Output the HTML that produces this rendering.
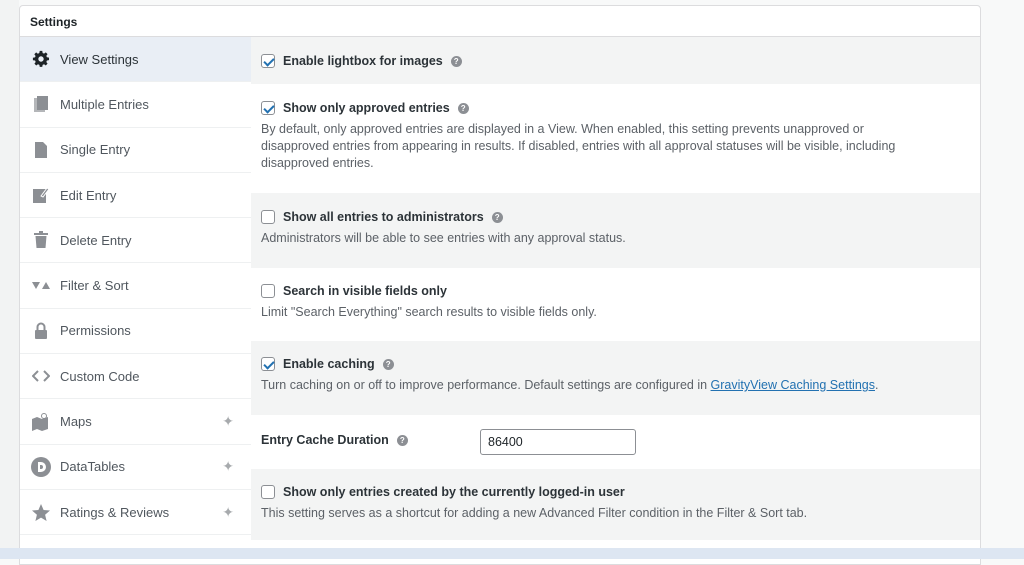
<!DOCTYPE html>
<html><head><style>
*{box-sizing:border-box;margin:0;padding:0}
body{width:1024px;height:559px;overflow:hidden;background:#f8f9f9;font-family:"Liberation Sans",sans-serif;color:#3c434a;position:relative}
.leftbg{position:absolute;left:0;top:0;width:19px;height:559px;background:#f2f3f3}
.panel{position:absolute;left:19px;top:5px;width:962px;height:560px;background:#fff;border:1px solid #dcdcde;border-radius:4px 4px 0 0}
.hdr{height:31px;border-bottom:1px solid #dcdcde;font-size:12px;font-weight:bold;padding:9px 10px;color:#1d2327}
.side{position:absolute;left:0;top:31px;width:231px}
.it{height:45.3px;border-bottom:1px solid #eef0f1;display:flex;align-items:center;font-size:13px;color:#50575e;position:relative}
.it .ic{width:40px;display:flex;justify-content:center;padding-left:2px}
.it.act{background:#e9eef5;color:#2c3338}
.plus{position:absolute;right:17px;color:#a7aaad;font-size:14px}
.main{position:absolute;left:231px;top:31px;right:0}
.row{padding:0 10px;position:relative}
.g{background:#f3f4f4}
.lab{font-size:12.5px;font-weight:bold;color:#2c3338;display:flex;align-items:center;height:20px}
.cb{width:14px;height:14px;border:1px solid #8c8f94;border-radius:3px;background:#fff;margin-right:8px;position:relative}
.cb.on::after{content:"";position:absolute;left:3.5px;top:0.5px;width:4px;height:8px;border:solid #2271b1;border-width:0 2px 2px 0;transform:rotate(45deg)}
.q{display:inline-block;width:11px;height:11px;border-radius:50%;background:#8c8f94;color:#fff;font-size:8px;text-align:center;line-height:11px;margin-left:8px;font-weight:bold}
.d{font-size:12.5px;color:#5c6167;line-height:17px;max-width:670px}
a{color:#2271b1}
.task{position:absolute;left:0;top:548px;width:1024px;height:11px;background:#dde6f2}
</style></head><body>
<div class="leftbg"></div>
<div class="panel">
<div class="hdr">Settings</div>
<div class="side">
<div class="it act"><span class="ic"><svg width="18" height="18" viewBox="0 0 20 20"><path fill="#1d2327" d="M8.6 1h2.8l.4 2.3 1.6.7 1.9-1.4 2 2-1.4 1.9.7 1.6 2.3.4v2.8l-2.3.4-.7 1.6 1.4 1.9-2 2-1.9-1.4-1.6.7-.4 2.3H8.6l-.4-2.3-1.6-.7-1.9 1.4-2-2 1.4-1.9-.7-1.6L1 11.4V8.6l2.3-.4.7-1.6-1.4-1.9 2-2 1.9 1.4 1.6-.7zM10 7a3 3 0 100 6 3 3 0 000-6z"/></svg></span>View Settings</div>
<div class="it"><span class="ic"><svg width="16" height="18"><rect x="1" y="3" width="11" height="14" fill="#b4b6b9"/><rect x="4" y="1" width="11" height="14" fill="#8c8f94"/></svg></span>Multiple Entries</div>
<div class="it"><span class="ic"><svg width="14" height="18"><path d="M1 1h8l4 4v12H1z" fill="#8c8f94"/></svg></span>Single Entry</div>
<div class="it"><span class="ic"><svg width="18" height="18"><rect x="1" y="3" width="13" height="14" fill="#8c8f94"/><path d="M9 10l6-8 2 1-6 8z" fill="#8c8f94" stroke="#fff"/></svg></span>Edit Entry</div>
<div class="it"><span class="ic"><svg width="14" height="18"><rect x="0" y="2" width="14" height="2" fill="#8c8f94"/><rect x="5" y="0" width="4" height="2" fill="#8c8f94"/><path d="M1.5 5h11l-1 12h-9z" fill="#8c8f94"/></svg></span>Delete Entry</div>
<div class="it"><span class="ic"><svg width="18" height="10"><path d="M0 1h8L4 8z M10 8h8L14 1z" fill="#8c8f94"/></svg></span>Filter &amp; Sort</div>
<div class="it"><span class="ic"><svg width="14" height="18"><path d="M3.5 8V5a3.5 3.5 0 017 0v3" stroke="#8c8f94" stroke-width="2" fill="none"/><rect x="1" y="8" width="12" height="9" rx="1" fill="#8c8f94"/></svg></span>Permissions</div>
<div class="it"><span class="ic"><svg width="18" height="12"><path d="M6 1L1 6l5 5M12 1l5 5-5 5" stroke="#8c8f94" stroke-width="2" fill="none"/></svg></span>Custom Code</div>
<div class="it"><span class="ic"><svg width="20" height="18"><path d="M1 6l5-2 5 2 6-2v12l-6 2-5-2-5 2z" fill="#8c8f94"/><circle cx="13" cy="3" r="2.5" fill="#fff" stroke="#8c8f94"/></svg></span>Maps<span class="plus">✦</span></div>
<div class="it"><span class="ic"><svg width="20" height="20"><circle cx="10" cy="10" r="10" fill="#8c8f94"/><path d="M7 5h3a5 5 0 010 10H7z" fill="#fff"/><path d="M9 8h1a2 2 0 010 4H9z" fill="#8c8f94"/></svg></span>DataTables<span class="plus">✦</span></div>
<div class="it"><span class="ic"><svg width="20" height="19"><path d="M10 1l2.6 6 6.4.5-4.9 4.2 1.5 6.3L10 14.6 4.4 18l1.5-6.3L1 7.5 7.4 7z" fill="#8c8f94"/></svg></span>Ratings &amp; Reviews<span class="plus">✦</span></div>
</div>
<div class="main">
<div class="row g" style="height:47px;padding-top:14px"><div class="lab"><span class="cb on"></span>Enable lightbox for images<span class="q">?</span></div></div>
<div class="row" style="height:109px;padding-top:14px"><div class="lab"><span class="cb on"></span>Show only approved entries<span class="q">?</span></div><div class="d" style="margin-top:3px">By default, only approved entries are displayed in a View. When enabled, this setting prevents unapproved or disapproved entries from appearing in results. If disabled, entries with all approval statuses will be visible, including disapproved entries.</div></div>
<div class="row g" style="height:75px;padding-top:14px"><div class="lab"><span class="cb"></span>Show all entries to administrators<span class="q">?</span></div><div class="d" style="margin-top:3px">Administrators will be able to see entries with any approval status.</div></div>
<div class="row" style="height:73px;padding-top:13px"><div class="lab"><span class="cb"></span>Search in visible fields only</div><div class="d" style="margin-top:3px">Limit "Search Everything" search results to visible fields only.</div></div>
<div class="row g" style="height:74px;padding-top:13px"><div class="lab"><span class="cb on"></span>Enable caching<span class="q">?</span></div><div class="d" style="margin-top:3px;max-width:none">Turn caching on or off to improve performance. Default settings are configured in <a href="#">GravityView Caching Settings</a>.</div></div>
<div class="row" style="height:54px;padding-top:15px"><div class="lab">Entry Cache Duration<span class="q">?</span></div><div style="position:absolute;left:229px;top:14px;width:156px;height:26px;border:1px solid #8c8f94;border-radius:3px;font-size:12.5px;padding:5px 7px;color:#1d2327">86400</div></div>
<div class="row g" style="height:71px;padding-top:13px"><div class="lab"><span class="cb"></span>Show only entries created by the currently logged-in user</div><div class="d" style="margin-top:3px;max-width:none">This setting serves as a shortcut for adding a new Advanced Filter condition in the Filter &amp; Sort tab.</div></div>
</div>
</div>
<div class="task"></div>
</body></html>
